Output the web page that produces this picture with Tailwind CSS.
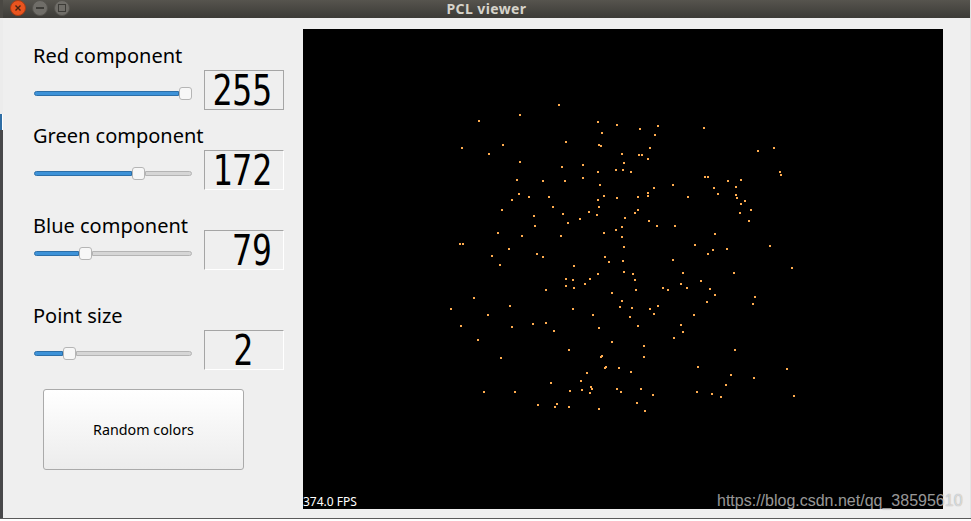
<!DOCTYPE html>
<html lang="en">
<head>
    <meta charset="UTF-8">
    <title>PCL viewer</title>
    <script src="https://cdn.jsdelivr.net/npm/@tailwindcss/browser@4"></script>
</head>
<body class="bg-white overflow-hidden">
<div class="relative w-[971px] h-[521px] flex flex-col font-['Noto_Sans',sans-serif]">
    <div class="flex h-[518px]">
        <!-- what is left of the desktop behind the window -->
        <div class="w-[3px] flex flex-col">
            <div class="h-[18px] bg-[#4a4843]"></div>
            <div class="h-[96px] bg-[#ececec]"></div>
            <div class="h-[16px] w-[2px] bg-[#2f6ea5]"></div>
            <div class="flex-1 bg-[#48484a]"></div>
        </div>
        <div class="w-[967px] flex flex-col bg-[#efefef]">
            <!-- title bar -->
            <div class="relative h-[18px] flex items-center justify-center bg-gradient-to-b from-[#56544e] to-[#3c3b37]">
                <div class="absolute left-[7px] top-0 flex items-center gap-[6px]">
                    <div class="w-4 h-4 rounded-full bg-[#e9541f] border border-[#a83c14] flex items-center justify-center">
                        <svg width="8" height="8" viewBox="0 0 8 8"><path d="M1.5 1.5l5 5M6.5 1.5l-5 5" stroke="#4a2410" stroke-width="1.4"/></svg>
                    </div>
                    <div class="w-4 h-4 rounded-full bg-[#6f6d68] border border-[#55534e] flex items-center justify-center">
                        <div class="w-2 h-[1.5px] bg-[#3c3b37]"></div>
                    </div>
                    <div class="w-4 h-4 rounded-full bg-[#6f6d68] border border-[#55534e] flex items-center justify-center">
                        <div class="w-2 h-2 border border-[#3c3b37]"></div>
                    </div>
                </div>
                <span class="text-[14px] leading-[16px] tracking-[0.4px] font-bold text-[#d6d3ca] -mt-px">PCL viewer</span>
            </div>
            <div class="flex flex-1">
                <!-- controls -->
                <div class="w-[300px] pl-[30px] pt-[24px] flex flex-col">
                    <div class="h-7 flex items-center text-[20px] text-black">Red component</div>
                    <div class="flex ml-px">
                        <div class="w-[158px] h-[13px] mt-[17px] flex items-center">
                            <div class="w-[145px] h-[5px] rounded-l-sm bg-[#3d92d8] border border-[#2d6fa8]"></div>
                            <div class="w-[13px] h-[13px] shrink-0 rounded-[3px] bg-[#f7f7f7] border border-[#b5b5b5]"></div>
                        </div>
                        <div class="ml-3 w-20 h-10 flex items-center justify-end pr-[11px] border border-[#a5a5a5] font-['DejaVu_Sans_Mono',monospace] text-[33px] leading-none text-black"><span class="scale-y-[1.3]">255</span></div>
                    </div>

                    <div class="h-7 mt-3 flex items-center text-[20px] text-black">Green component</div>
                    <div class="flex ml-px">
                        <div class="w-[158px] h-[13px] mt-[17px] flex items-center">
                            <div class="w-[98px] h-[5px] rounded-l-sm bg-[#3d92d8] border border-[#2d6fa8]"></div>
                            <div class="w-[13px] h-[13px] shrink-0 rounded-[3px] bg-[#f7f7f7] border border-[#b5b5b5]"></div>
                            <div class="flex-1 h-[5px] rounded-r-sm bg-[#d6d6d6] border border-[#b4b4b4]"></div>
                        </div>
                        <div class="ml-3 w-20 h-10 flex items-center justify-end pr-[11px] border border-t-[#a5a5a5] border-l-[#a5a5a5] border-r-white border-b-white font-['DejaVu_Sans_Mono',monospace] text-[33px] leading-none text-black"><span class="scale-y-[1.3]">172</span></div>
                    </div>

                    <div class="h-7 mt-[22px] flex items-center text-[20px] text-black">Blue component</div>
                    <div class="flex ml-px -mt-[10px]">
                        <div class="w-[158px] h-[13px] mt-[17px] flex items-center">
                            <div class="w-[45px] h-[5px] rounded-l-sm bg-[#3d92d8] border border-[#2d6fa8]"></div>
                            <div class="w-[13px] h-[13px] shrink-0 rounded-[3px] bg-[#f7f7f7] border border-[#b5b5b5]"></div>
                            <div class="flex-1 h-[5px] rounded-r-sm bg-[#d6d6d6] border border-[#b4b4b4]"></div>
                        </div>
                        <div class="ml-3 w-20 h-10 flex items-center justify-end pr-[11px] border border-t-[#a5a5a5] border-l-[#a5a5a5] border-r-white border-b-white font-['DejaVu_Sans_Mono',monospace] text-[33px] leading-none text-black"><span class="scale-y-[1.3]">79</span></div>
                    </div>

                    <div class="h-7 mt-8 flex items-center text-[20px] text-black">Point size</div>
                    <div class="flex ml-px">
                        <div class="w-[158px] h-[13px] mt-[17px] flex items-center">
                            <div class="w-[29px] h-[5px] rounded-l-sm bg-[#3d92d8] border border-[#2d6fa8]"></div>
                            <div class="w-[13px] h-[13px] shrink-0 rounded-[3px] bg-[#f7f7f7] border border-[#b5b5b5]"></div>
                            <div class="flex-1 h-[5px] rounded-r-sm bg-[#d6d6d6] border border-[#b4b4b4]"></div>
                        </div>
                        <div class="ml-3 w-20 h-10 flex items-center justify-end pr-[30px] border border-t-[#a5a5a5] border-l-[#a5a5a5] border-r-white border-b-white font-['DejaVu_Sans_Mono',monospace] text-[33px] leading-none text-black"><span class="scale-y-[1.3]">2</span></div>
                    </div>

                    <button class="ml-[10px] mt-[19px] w-[201px] h-[81px] rounded-[3px] border border-[#aaaaaa] bg-gradient-to-b from-white to-[#ececec] text-[14.3px] text-black">Random colors</button>
                </div>
                <!-- point cloud -->
                <div class="pt-[11px]">
                    <div class="relative w-[640px] h-[480px] bg-black">
                        <svg class="block" width="640" height="480" viewBox="303 29 640 480" shape-rendering="crispEdges">
                            <path fill="#ffac4f" d="M558 104h2v2h-2zM519 114h2v2h-2zM478 120h2v2h-2zM597 121h2v2h-2zM616 124h2v2h-2zM601 132h2v2h-2zM565 141h2v2h-2zM598 144h2v2h-2zM600 145h2v2h-2zM502 144h2v2h-2zM461 147h2v2h-2zM488 153h2v2h-2zM621 153h2v2h-2zM623 162h2v2h-2zM519 161h2v2h-2zM582 164h2v2h-2zM561 166h2v2h-2zM615 169h2v2h-2zM622 169h2v2h-2zM597 171h2v2h-2zM582 177h2v2h-2zM516 179h2v2h-2zM542 180h2v2h-2zM564 180h2v2h-2zM599 184h2v2h-2zM518 193h2v2h-2zM603 195h2v2h-2zM528 196h2v2h-2zM548 196h2v2h-2zM511 199h2v2h-2zM597 199h2v2h-2zM616 197h2v2h-2zM552 206h2v2h-2zM598 206h2v2h-2zM501 209h2v2h-2zM657 125h2v2h-2zM639 128h2v2h-2zM703 127h2v2h-2zM654 134h2v2h-2zM649 147h2v2h-2zM638 154h2v2h-2zM641 154h2v2h-2zM647 158h2v2h-2zM773 147h2v2h-2zM757 150h2v2h-2zM630 171h2v2h-2zM779 171h2v2h-2zM780 174h2v2h-2zM704 176h2v2h-2zM707 176h2v2h-2zM727 180h2v2h-2zM740 179h2v2h-2zM672 184h2v2h-2zM653 187h2v2h-2zM713 187h2v2h-2zM735 186h2v2h-2zM647 192h2v2h-2zM717 193h2v2h-2zM735 194h2v2h-2zM647 195h2v2h-2zM637 196h2v2h-2zM687 196h2v2h-2zM736 197h2v2h-2zM744 200h2v2h-2zM740 203h2v2h-2zM750 209h2v2h-2zM637 209h2v2h-2zM533 215h2v2h-2zM562 213h2v2h-2zM588 211h2v2h-2zM596 214h2v2h-2zM624 217h2v2h-2zM579 218h2v2h-2zM567 222h2v2h-2zM534 225h2v2h-2zM621 226h2v2h-2zM615 229h2v2h-2zM497 232h2v2h-2zM603 232h2v2h-2zM521 235h2v2h-2zM560 235h2v2h-2zM621 236h2v2h-2zM459 243h2v2h-2zM462 243h2v2h-2zM623 246h2v2h-2zM508 248h2v2h-2zM536 253h2v2h-2zM542 256h2v2h-2zM491 255h2v2h-2zM604 256h2v2h-2zM608 261h2v2h-2zM622 260h2v2h-2zM499 264h2v2h-2zM573 265h2v2h-2zM623 271h2v2h-2zM597 273h2v2h-2zM565 278h2v2h-2zM572 279h2v2h-2zM589 278h2v2h-2zM584 283h2v2h-2zM565 285h2v2h-2zM573 287h2v2h-2zM545 289h2v2h-2zM611 292h2v2h-2zM473 297h2v2h-2zM621 300h2v2h-2zM509 305h2v2h-2zM619 306h2v2h-2zM450 308h2v2h-2zM572 308h2v2h-2zM487 314h2v2h-2zM592 314h2v2h-2zM629 316h2v2h-2zM634 212h2v2h-2zM739 212h2v2h-2zM648 220h2v2h-2zM748 220h2v2h-2zM656 225h2v2h-2zM674 225h2v2h-2zM714 233h2v2h-2zM694 244h2v2h-2zM712 249h2v2h-2zM726 248h2v2h-2zM769 245h2v2h-2zM707 253h2v2h-2zM672 259h2v2h-2zM791 267h2v2h-2zM632 273h2v2h-2zM682 272h2v2h-2zM733 272h2v2h-2zM634 279h2v2h-2zM700 280h2v2h-2zM680 283h2v2h-2zM662 287h2v2h-2zM686 287h2v2h-2zM709 288h2v2h-2zM635 289h2v2h-2zM667 289h2v2h-2zM714 294h2v2h-2zM754 296h2v2h-2zM706 301h2v2h-2zM752 303h2v2h-2zM631 307h2v2h-2zM657 305h2v2h-2zM649 308h2v2h-2zM653 313h2v2h-2zM693 314h2v2h-2zM460 325h2v2h-2zM511 326h2v2h-2zM532 323h2v2h-2zM545 322h2v2h-2zM553 330h2v2h-2zM598 327h2v2h-2zM477 339h2v2h-2zM611 341h2v2h-2zM568 349h2v2h-2zM500 357h2v2h-2zM600 356h2v2h-2zM601 355h2v2h-2zM604 367h2v2h-2zM605 366h2v2h-2zM618 367h2v2h-2zM586 372h2v2h-2zM550 382h2v2h-2zM580 380h2v2h-2zM590 386h2v2h-2zM591 388h2v2h-2zM569 390h2v2h-2zM581 389h2v2h-2zM616 388h2v2h-2zM620 391h2v2h-2zM589 392h2v2h-2zM483 391h2v2h-2zM514 391h2v2h-2zM537 404h2v2h-2zM556 403h2v2h-2zM554 406h2v2h-2zM568 406h2v2h-2zM598 408h2v2h-2zM637 325h2v2h-2zM680 324h2v2h-2zM682 331h2v2h-2zM673 337h2v2h-2zM643 345h2v2h-2zM734 349h2v2h-2zM643 356h2v2h-2zM630 371h2v2h-2zM697 366h2v2h-2zM730 374h2v2h-2zM786 368h2v2h-2zM753 377h2v2h-2zM725 384h2v2h-2zM640 388h2v2h-2zM696 391h2v2h-2zM652 394h2v2h-2zM711 393h2v2h-2zM720 396h2v2h-2zM793 395h2v2h-2zM636 402h2v2h-2zM644 410h2v2h-2z"/>
                        </svg>
                        <span class="absolute left-0 bottom-0 text-[12px] leading-[14px] text-white">374.0 FPS</span>
                    </div>
                </div>
            </div>
        </div>
        <div class="flex-1 bg-[#e4e4e4]"></div>
    </div>
    <div class="h-[1px] bg-[#5a5a5a]"></div>
    <div class="flex-1 bg-white"></div>
    <!-- csdn watermark -->
    <span class="absolute left-[717px] top-[491px] font-['Liberation_Sans',sans-serif] text-[16px] leading-[20px] text-white/60 [text-shadow:0_0_1px_rgba(0,0,0,0.4)]">https://blog.csdn.net/qq_38595610</span>
</div>
</body>
</html>
